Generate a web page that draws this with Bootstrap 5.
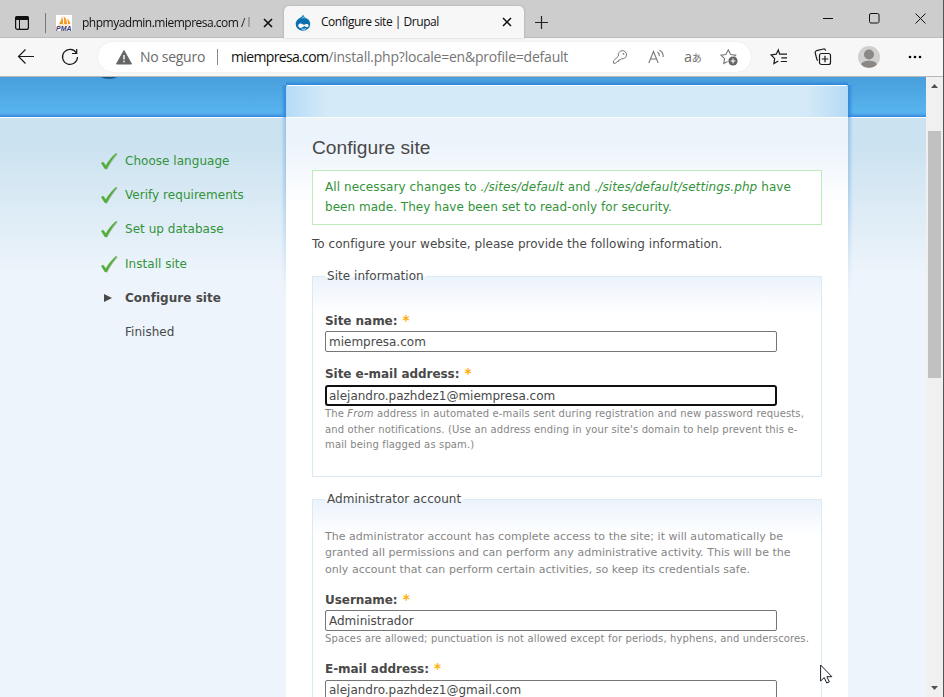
<!DOCTYPE html>
<html lang="en">
<head>
<meta charset="utf-8">
<meta name="viewport" content="width=device-width, initial-scale=1">
<title>Configure site | Drupal</title>
<link href="https://cdn.jsdelivr.net/npm/bootstrap@5.3.0/dist/css/bootstrap.min.css" rel="stylesheet">
<style>
  body { font-family: "DejaVu Sans", Verdana, sans-serif; font-size: 12px; letter-spacing: .035px; color: #494949; height: 697px; background: #edf4fb; }
  svg { display: block; flex: none; }
  .chrome { font-family: "Open Sans", "Noto Sans", sans-serif; color: #111; letter-spacing: 0; }
  .window { border-right: 1px solid #555; }

  .tabstrip { height: 38px; background: #cdcdcd; box-shadow: inset 0 -1px #bcbcbc; padding-left: 14px; }
  .tab-label { font-size: 12px; letter-spacing: -.5px; line-height: 20px; }
  .tab-label.fade-end { width: 174px; margin-left: 10px; margin-right: 7px; -webkit-mask-image: linear-gradient(90deg, #000 160px, rgba(0,0,0,.15) 172px); }
  .tab-label.current { margin-left: 10px; letter-spacing: -.46px; }
  .tab-divider { width: 1px; height: 20px; background: #777; margin-left: 15px; margin-right: 10px; }
  .tab-active { width: 240px; height: 32px; margin-left: 11px; background: #f7f7f7; border-radius: 5px 5px 0 0; padding-left: 11px; padding-right: 8px; box-shadow: 0 0 2px rgba(0,0,0,.25); }
  .new-tab { padding-left: 11px; }
  .winbuttons { gap: 35px; padding-right: 17px; padding-bottom: 2px; }

  .toolbar { height: 39px; background: #f7f7f7; border-bottom: 1px solid #b8b8b8; padding-left: 17px; }
  .toolbar > .spaced { margin-left: 26px; }
  .toolbar > .spaced-sm { margin-left: 19px; }
  .toolbar > .spaced-lg { margin-left: 28px; }
  .address { width: 653px; height: 30px; margin-left: 19px; background: #fff; border-radius: 15px; padding-left: 18px; padding-right: 13px; box-shadow: 0 0 2px rgba(0,0,0,.08); font-size: 14px; line-height: 20px; }
  .address-actions { gap: 20px; }
  .insecure { color: #6b6b6b; letter-spacing: -.27px; margin-left: 8px; width: 65px; }
  .addr-divider { width: 1px; height: 16px; background: #888; margin-left: 12px; margin-right: 13px; }
  .host { color: #111; letter-spacing: -.65px; }
  .path { color: #757575; letter-spacing: -.215px; }
  .translate { width: 16px; height: 20px; color: #707070; letter-spacing: -.3px; font-size: 14.5px; line-height: 19px; }
  .translate span { font-family: "Noto Sans CJK JP", sans-serif; font-size: 10px; }

  .site { z-index: 0; background:
      linear-gradient(#fff, #fff) 0 40px / 100% 1px no-repeat,
      linear-gradient(#479fdc 0, #57b3ee 35px, #50aaea 37px, #3585df 40px) 0 0 / 100% 40px no-repeat,
      linear-gradient(#cbe2f0 0, #cbe2f0 25px, #edf4fb 155px) 0 41px / 100% 165px no-repeat, #edf4fb; }
  .logo-edge { left: 96px; top: -16px; width: 26px; height: 18px; background: #1b5988; border-radius: 50%; }
  .steps { width: 286px; padding-left: 100px; padding-top: 67px; }
  .steps li { height: 34.2px; }
  .step-icon { width: 25px; }
  .done { color: #33933a; }

  .panel { width: 562px; margin-top: 8px; padding: 0 26px; border-radius: 2px 2px 0 0; background:
      linear-gradient(#fff, #fff) 0 0 / 100% 1px no-repeat,
      linear-gradient(#fff, #fff) 0 32px / 100% 1px no-repeat,
      linear-gradient(90deg, #b5dbf6, #d4eaf8 42px) 0 0 / 42px 32px no-repeat,
      linear-gradient(270deg, #b5dbf6, #d4eaf8 42px) 100% 0 / 42px 32px no-repeat,
      linear-gradient(#d4eaf8, #d4eaf8) 0 0 / 100% 32px no-repeat,
      linear-gradient(#ebf3fb 0, #ebf3fb 20px, #fff 88px) 0 33px / 100% 90px no-repeat, #fff; }
  .panel::before { content: ""; position: absolute; z-index: -1; inset: -4px -5px auto; height: 230px; background:
      linear-gradient(0deg, #2f83da, transparent) 5px 0 / 562px 4px no-repeat,
      linear-gradient(270deg, #3388d8, transparent) 0 4px / 5px 100% no-repeat,
      linear-gradient(90deg, #3388d8, transparent) 100% 4px / 5px 100% no-repeat;
      -webkit-mask-image: linear-gradient(#000 36px, rgba(0,0,0,.35) 37px, rgba(0,0,0,.3) 100px, transparent 215px); }
  .page-title { font: 19.2px/26px "Liberation Sans", Arial, sans-serif; letter-spacing: 0; margin: 50px 0 9px; }
  .status { height: 55px; padding: 6px 12px; border: 1px solid #bbeebb; background: #fff; color: #33933a; line-height: 20px; }
  .status .first { letter-spacing: .082px; }
  .intro { line-height: 20px; margin: 9px 0 22px; }
  .group { height: 201px; border: 1px solid #d9eaf5; padding: 0 12px; background: linear-gradient(#ebf3fb, #fff 36px); }
  .group + .group { height: 240px; margin-top: 22px; }
  .group-title { height: 18px; margin-top: -10px; line-height: 18px; padding: 0 2px; align-self: flex-start; background: linear-gradient(#fff 10px, transparent 10px); }
  .field-label { font-weight: bold; letter-spacing: -.045px; line-height: 18px; height: 18px; margin: 13px 0 2px; }
  .group-title + .field-label { margin: 27px 0 1px; }
  .note + .field-label { margin: 13px 0 1px; }
  .hint + .field-label { margin: 13px 0 2px; }
  .req { color: #ffae00; font-size: 13.5px; line-height: 1; margin-left: 1px; }
  .field { width: 452px; height: 21px; padding: 1px 3px; border: 1px solid #767676; border-radius: 2px; font: inherit; letter-spacing: 0; color: #494949; background: #fff; outline: 0; }
  .field.active { border: 2px solid #101010; padding: 0 2px; border-radius: 3px; }
  .hint { font-size: 10px; line-height: 15.5px; letter-spacing: .135px; color: #858585; }
  .note { font-size: 11px; line-height: 16.5px; letter-spacing: .032px; color: #858585; margin-top: 20.5px; }

  .scroller { width: 17px; background: #f0f0f0; padding: 6px 2px; }
  .thumb { width: 13px; height: 247px; background: #c1c1c1; margin-top: 42px; }
  .pointer { left: 820px; top: 664px; z-index: 5; }
</style>
<script src="https://cdn.jsdelivr.net/npm/bootstrap@5.3.0/dist/js/bootstrap.bundle.min.js"></script>
</head>
<body class="overflow-hidden">
<div class="window d-flex flex-column h-100 position-relative overflow-hidden">

  <header class="chrome flex-shrink-0">
    <div class="tabstrip d-flex align-items-end">
      <div class="d-flex align-items-center h-100 pt-2">
        <svg width="16" height="16" viewBox="0 0 16 16"><rect x="1.6" y="1.6" width="12.8" height="12.8" rx="2" fill="none" stroke="#111" stroke-width="1.2"/><path d="M1 3a2 2 0 0 1 2-2h10a2 2 0 0 1 2 2v2H1z" fill="#111"/><path d="M5.500 4v10" stroke="#111"/></svg>
        <div class="tab-divider"></div>
        <svg width="16" height="16" viewBox="0 0 16 16"><rect width="16" height="16" fill="#fff"/><path d="M3 9C4.500 7 5.500 4 6 1.500 7 4 7.200 7 7 9zM8 9C8.500 6 8 3 7.500 1 10 3 11 6 11 9zM12 9c0-2-.5-4-1-5.500C13 5 14 7 14.300 9z" fill="#f6971c"/><path d="M2 10h12" stroke="#f9bd68" stroke-width=".7"/><text x="0" y="15.700" font-family="Liberation Sans" font-size="6.500" font-weight="bold" font-style="italic" fill="#34366f" textLength="15.500" lengthAdjust="spacingAndGlyphs">PMA</text></svg>
        <div class="tab-label fade-end text-nowrap">phpmyadmin.miempresa.com / l</div>
        <svg width="10" height="10" viewBox="0 0 10 10"><path d="M1 1l8 8M9 1L1 9" stroke="#111" stroke-width="1.600"/></svg>
      </div>
      <div class="tab-active d-flex align-items-center">
        <svg width="16" height="17" viewBox="0 0 16 17"><path d="M8 .5C7.500 3 5 3.500 3 5.200 1.500 6.500.7 8 .7 10a7.200 6.700 0 0 0 14.500 0c0-2-1-3.700-2.500-4.900C11 3.700 8.500 3 8 .5z" fill="#0b6fae"/><path d="M5 4.800C6.800 3.800 8 3.500 8 1.500c.8 2 2.500 2.300 4 3.500-2.500-1-4.500-1-7-.2z" fill="#63b5e4"/><path d="M4.200 13.500c-2-1.500-.5-4.200 1.600-3.900 1.700.2 2.300 1.500 3.400 1.200 1.200-.5 2.700-1.300 3.800-.5 1.500 1.700-.3 3.700-2 2.600-1-.7-1.800-.8-2.700-.1-1.300 1-2.700 1.700-4.100.7z" fill="#fff"/><path d="M6.500 14.700c1.300.8 3 .8 4.300 0" stroke="#fff" stroke-width=".9" fill="none"/></svg>
        <div class="tab-label current text-nowrap">Configure site | Drupal</div>
        <svg width="10" height="10" viewBox="0 0 10 10" class="ms-auto me-1"><path d="M1 1l8 8M9 1L1 9" stroke="#111" stroke-width="1.500"/></svg>
      </div>
      <div class="new-tab d-flex align-items-center h-100 pt-2"><svg width="14" height="14" viewBox="0 0 14 14"><path d="M6.500 0v13M0 6.500h13" stroke="#222" stroke-width="1.200"/></svg></div>
      <div class="winbuttons d-flex align-items-center h-100 ms-auto">
        <svg width="11" height="11" viewBox="0 0 11 11"><path d="M0 5.500h10" stroke="#111"/></svg>
        <svg width="11" height="11" viewBox="0 0 11 11"><rect x=".5" y=".5" width="9.500" height="9.500" rx="1.500" fill="none" stroke="#111"/></svg>
        <svg width="11" height="11" viewBox="0 0 11 11"><path d="M.5.500l10 10M10.500.500l-10 10" stroke="#111"/></svg>
      </div>
    </div>

    <div class="toolbar d-flex align-items-center">
      <svg width="18" height="16" viewBox="0 0 18 16"><path d="M17 7.500H1.500M8.500.5l-7 7 7 7" fill="none" stroke="#1b1b1b" stroke-width="1.200"/></svg>
      <svg class="spaced" width="18" height="18" viewBox="0 0 18 18"><path d="M15.400 5A7.500 7.500 0 1 0 16.500 9M15.700 1v4.500H11" fill="none" stroke="#1b1b1b" stroke-width="1.200"/></svg>
      <div class="address d-flex align-items-center">
        <svg width="16" height="15" viewBox="0 0 16 15"><path d="M8 .5L15.500 14H.5z" fill="#666" stroke="#666" stroke-linejoin="round"/><path d="M8 5v4.500M8 10.700v1.600" stroke="#fff" stroke-width="1.400"/></svg>
        <span class="insecure text-nowrap">No seguro</span>
        <span class="addr-divider"></span>
        <span class="text-nowrap"><span class="host">miempresa.com</span><span class="path">/install.php?locale=en&amp;profile=default</span></span>
        <div class="address-actions d-flex align-items-center ms-auto">
          <svg width="16" height="16" viewBox="0 0 16 16"><path d="M6.500 7A4.100 4.100 0 1 1 9.300 9.700L8.200 11H6.700v1.500H5.200L3.700 14.200H1.500v-2.400z" fill="none" stroke="#777"/><circle cx="11.500" cy="4.800" r=".9" fill="#777"/></svg>
          <svg width="16" height="16" viewBox="0 0 16 16"><path d="M.8 14L5.500 2.500 10.200 14M2.400 10h6.200M9.500 3c1.500 1 2 2.500 1.700 4.200M11.500 1.200c2.800 1.500 4 3.800 3.500 6.800" fill="none" stroke="#777" stroke-width="1.100"/></svg>
          <span class="translate text-nowrap">a<span>あ</span></span>
          <svg width="18" height="18" viewBox="0 0 18 18"><path d="M7.500 13.500l-3.800 2 .9-4.900L1 7.200l4.800-.6L8.300 2l2.400 4.600 5 .6-1 1.200" fill="none" stroke="#777" stroke-width="1.100"/><circle cx="13" cy="13" r="4.600" fill="#636363"/><path d="M13 10.600v4.800M10.600 13h4.800" stroke="#fff" stroke-width="1.100"/></svg>
        </div>
      </div>
      <svg class="spaced-sm" width="18" height="18" viewBox="0 0 18 18"><path d="M10.500 6.200H9.600L8.300 1.900 6.200 6.200 1.200 7l3.500 3.600-.8 4.900L8.300 13M10 6.200H17M11.300 9.800H17M10.800 13.500H17" fill="none" stroke="#1b1b1b" stroke-width="1.200"/></svg>
      <svg class="spaced" width="18" height="18" viewBox="0 0 18 18"><path d="M4 12.500C2.500 12 2.800 10.500 2.300 9L1.200 4.800C1 3.500 1.500 3 2.500 2.700L9.500 1c1.300-.2 1.800.3 2.200 1.700" fill="none" stroke="#1b1b1b" stroke-width="1.200"/><rect x="5.500" y="5.500" width="11" height="11" rx="2" fill="#f7f7f7" stroke="#1b1b1b" stroke-width="1.200"/><path d="M11 7.800v6.500M7.800 11h6.500" stroke="#1b1b1b" stroke-width="1.200"/></svg>
      <svg class="spaced" width="22" height="22" viewBox="0 0 22 22"><circle cx="11" cy="11" r="11" fill="#d2d0ce"/><circle cx="11" cy="8.500" r="5" fill="#8b8785"/><path d="M3.200 18.500c.8-5 14.800-5 15.600 0A11 11 0 0 1 3.200 18.500z" fill="#8b8785"/></svg>
      <svg class="spaced-lg" width="14" height="4" viewBox="0 0 14 4"><circle cx="2" cy="2" r="1.300"/><circle cx="7" cy="2" r="1.300"/><circle cx="12" cy="2" r="1.300"/></svg>
    </div>
  </header>

  <div class="d-flex flex-grow-1 overflow-hidden">
    <main class="site d-flex flex-grow-1 position-relative overflow-hidden">
      <div class="logo-edge position-absolute"></div>
      <ol class="steps list-unstyled mb-0 flex-shrink-0">
        <li class="d-flex align-items-center done"><span class="step-icon"><svg width="18" height="18" viewBox="0 0 18 18"><use href="#tick"/></svg></span>Choose language</li>
        <li class="d-flex align-items-center done"><span class="step-icon"><svg width="18" height="18" viewBox="0 0 18 18"><use href="#tick"/></svg></span>Verify requirements</li>
        <li class="d-flex align-items-center done"><span class="step-icon"><svg width="18" height="18" viewBox="0 0 18 18"><use href="#tick"/></svg></span>Set up database</li>
        <li class="d-flex align-items-center done"><span class="step-icon"><svg width="18" height="18" viewBox="0 0 18 18"><use href="#tick"/></svg></span>Install site</li>
        <li class="d-flex align-items-center fw-bold"><span class="step-icon"><svg width="18" height="10" viewBox="0 0 18 10"><path d="M4 1l8 4-8 4z" fill="#494949"/></svg></span>Configure site</li>
        <li class="d-flex align-items-center"><span class="step-icon"></span>Finished</li>
      </ol>
      <svg width="0" height="0" class="position-absolute"><defs><g id="tick"><path d="M2.200 12l2-1.200 2.100 3.400C9 9.700 12.500 5.500 16.800 1.700l.9.600C13.500 7 10.300 11.700 7.200 17.500H5.800z" fill="#a9b5ae"/><path d="M1 11l2.200-1.300 2.400 3.800C8.500 8.700 12 4.500 16 1l1 .4C13 6 9.700 11 6.600 16.900H4.800z" fill="#52b036"/></g></defs></svg>

      <section class="panel flex-shrink-0 position-relative text-nowrap">
        <h1 class="page-title">Configure site</h1>
        <div class="status">
          <div class="first">All necessary changes to <em>./sites/default</em> and <em>./sites/default/settings.php</em> have</div>
          <div>been made. They have been set to read-only for security.</div>
        </div>
        <p class="intro">To configure your website, please provide the following information.</p>

        <div class="group d-flex flex-column">
          <div class="group-title">Site information</div>
          <label class="field-label" for="site">Site name: <span class="req">*</span></label>
          <input class="field" id="site" value="miempresa.com">
          <label class="field-label" for="mail">Site e-mail address: <span class="req">*</span></label>
          <input class="field active" id="mail" value="alejandro.pazhdez1@miempresa.com">
          <div class="hint">The <em>From</em> address in automated e-mails sent during registration and new password requests,<br>and other notifications. (Use an address ending in your site's domain to help prevent this e-<br>mail being flagged as spam.)</div>
        </div>

        <div class="group d-flex flex-column">
          <div class="group-title">Administrator account</div>
          <div class="note">The administrator account has complete access to the site; it will automatically be<br>granted all permissions and can perform any administrative activity. This will be the<br>only account that can perform certain activities, so keep its credentials safe.</div>
          <label class="field-label" for="user">Username: <span class="req">*</span></label>
          <input class="field" id="user" value="Administrador">
          <div class="hint">Spaces are allowed; punctuation is not allowed except for periods, hyphens, and underscores.</div>
          <label class="field-label" for="email">E-mail address: <span class="req">*</span></label>
          <input class="field" id="email" value="alejandro.pazhdez1@gmail.com">
        </div>
      </section>
    </main>
    <aside class="scroller d-flex flex-column flex-shrink-0">
      <svg width="13" height="6" viewBox="0 0 13 6"><path d="M6.500 1l3.500 4H3z" fill="#505050"/></svg>
      <div class="thumb flex-shrink-0"></div>
      <svg class="mt-auto" width="13" height="6" viewBox="0 0 13 6"><path d="M3 1h7L6.500 5z" fill="#505050"/></svg>
    </aside>
  </div>

  <svg class="pointer position-absolute" width="13" height="20" viewBox="0 0 13 20"><path d="M.6 1v16l3.700-3.400 2.400 5.400 2.600-1.100-2.400-5.200h5z" fill="#fff" stroke="#1c1c28"/></svg>
</div>
</body>
</html>
